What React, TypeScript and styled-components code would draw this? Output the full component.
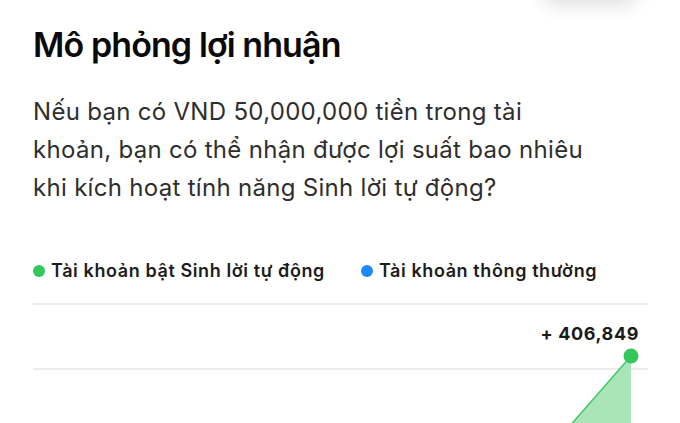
import * as React from 'react';
import styled, { createGlobalStyle } from 'styled-components';

const GlobalStyle = createGlobalStyle`
  html, body {
    margin: 0;
    padding: 0;
    background: #ffffff;
  }
  body {
    font-family: Inter, "Noto Sans", "Liberation Sans", sans-serif;
    -webkit-font-smoothing: antialiased;
  }
`;

const Page = styled.div`
  position: relative;
  width: 680px;
  height: 423px;
  overflow: hidden;
  background: #fff;
  padding: 0 32px 0 33px;
  box-sizing: border-box;
`;

const TopShadow = styled.div`
  position: absolute;
  top: -40px;
  right: 40px;
  width: 100px;
  height: 40px;
  border-radius: 20px;
  box-shadow: 0 6px 18px rgba(0, 0, 0, 0.12);
`;

const Title = styled.h1`
  margin: 0;
  padding-top: 24px;
  font-size: 34px;
  line-height: 42px;
  font-weight: 600;
  letter-spacing: -0.9px;
  color: #0a0a0a;
`;

const Description = styled.p`
  margin: 27px 0 0;
  font-size: 24px;
  line-height: 38px;
  font-weight: 400;
  letter-spacing: 0.3px;
  color: #2e2e2e;
  max-width: 560px;
`;

const Legend = styled.div`
  display: flex;
  align-items: center;
  gap: 36px;
  margin-top: 53px;
`;

const LegendItem = styled.div`
  display: flex;
  align-items: center;
  gap: 6px;
  font-size: 18px;
  line-height: 22px;
  font-weight: 600;
  letter-spacing: 0.6px;
  color: #1c1c1c;
`;

const Dot = styled.span<{ $color: string }>`
  width: 12px;
  height: 12px;
  border-radius: 50%;
  background: ${p => p.$color};
`;

const Chart = styled.div`
  position: relative;
  margin-top: 21px;
  width: 615px;
`;

const GridLine = styled.div`
  height: 2px;
  background: #ececec;
`;

const ValueRow = styled.div`
  display: flex;
  justify-content: flex-end;
  padding: 18px 9px 0 0;
  height: 63px;
  box-sizing: border-box;
  font-size: 18px;
  line-height: 22px;
  font-weight: 700;
  letter-spacing: 0.6px;
  color: #1a1a1a;
`;

const Area = styled.svg`
  position: absolute;
  left: 0;
  top: 0;
  overflow: visible;
`;

export default function App() {
  return (
    <>
      <GlobalStyle />
      <Page>
        <TopShadow />
        <Title>Mô phỏng lợi nhuận</Title>
        <Description>
          Nếu bạn có VND 50,000,000 tiền trong tài khoản, bạn có thể nhận được lợi suất bao nhiêu
          khi kích hoạt tính năng Sinh lời tự động?
        </Description>
        <Legend>
          <LegendItem>
            <Dot $color="#34c759" />
            Tài khoản bật Sinh lời tự động
          </LegendItem>
          <LegendItem>
            <Dot $color="#1e88ff" />
            Tài khoản thông thường
          </LegendItem>
        </Legend>
        <Chart>
          <GridLine />
          <ValueRow>+ 406,849</ValueRow>
          <GridLine />
          <Area width="615" height="130" viewBox="0 0 615 130">
            <polygon points="598,53 535,125 598,125" fill="#a9e5b7" />
            <line x1="598" y1="53" x2="535" y2="125" stroke="#3fcb64" strokeWidth="1.5" />
            <circle cx="598" cy="53" r="7.5" fill="#34c759" />
          </Area>
        </Chart>
      </Page>
    </>
  );
}
